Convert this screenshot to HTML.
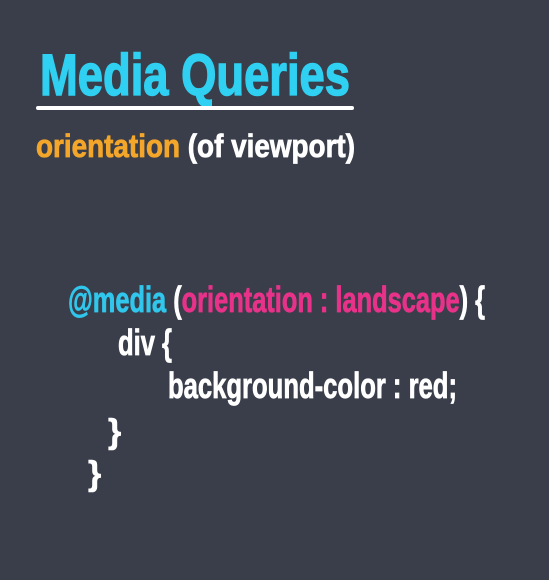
<!DOCTYPE html>
<html><head><meta charset="utf-8"><style>
html,body{margin:0;padding:0;background:#393e4a;width:549px;height:580px;overflow:hidden}
svg text{font-family:"Liberation Sans Narrow","Liberation Sans",sans-serif;font-weight:bold}
</style></head><body>
<svg width="549" height="580" viewBox="0 0 549 580" xmlns="http://www.w3.org/2000/svg">
<rect width="549" height="580" fill="#393e4a"/>
<text x="40" y="95" font-size="58" fill="#2fd0f2" stroke="#2fd0f2" stroke-width="1.5" textLength="310" lengthAdjust="spacingAndGlyphs">Media Queries</text>
<rect x="36" y="106" width="318" height="4" rx="2" fill="#ffffff"/>
<text x="36" y="157" font-size="32" stroke-width="0.8" textLength="319" lengthAdjust="spacingAndGlyphs"><tspan fill="#f3a62a" stroke="#f3a62a">orientation</tspan><tspan fill="#ffffff" stroke="#ffffff"> (of viewport)</tspan></text>
<text x="68" y="312" font-size="36" stroke-width="0.8" textLength="417" lengthAdjust="spacingAndGlyphs" fill="#ffffff" stroke="#ffffff"><tspan fill="#31c6ec" stroke="#31c6ec">@media</tspan> (<tspan fill="#e8328a" stroke="#e8328a">orientation : landscape</tspan>) {</text>
<text x="118" y="355" font-size="36" fill="#ffffff" stroke="#ffffff" stroke-width="0.8" textLength="54" lengthAdjust="spacingAndGlyphs">div {</text>
<text x="168" y="398" font-size="36" fill="#ffffff" stroke="#ffffff" stroke-width="0.8" textLength="289" lengthAdjust="spacingAndGlyphs">background-color : red;</text>
<text x="108" y="443" font-size="34" fill="#ffffff" stroke="#ffffff" stroke-width="0.6">}</text>
<text x="88" y="485" font-size="34" fill="#ffffff" stroke="#ffffff" stroke-width="0.6">}</text>
</svg>
</body></html>
